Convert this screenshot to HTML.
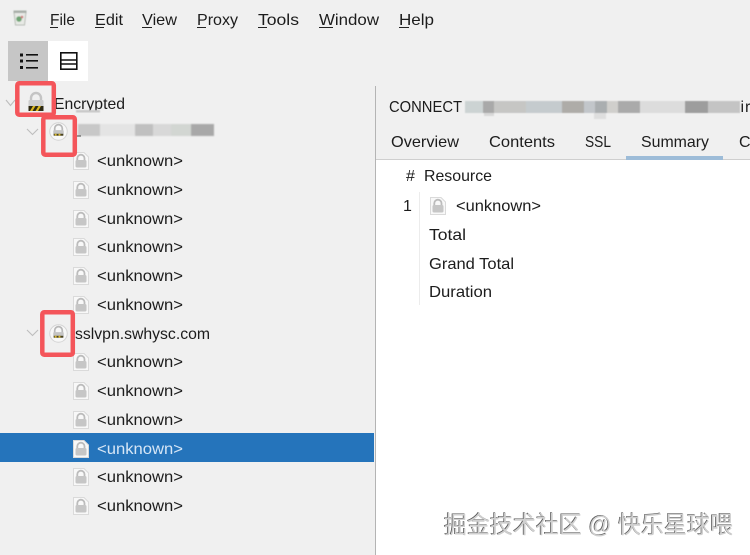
<!DOCTYPE html>
<html>
<head>
<meta charset="utf-8">
<style>
html,body{margin:0;padding:0;background:#f0f0f0;width:750px;height:555px;overflow:hidden}
svg{display:block;filter:blur(.3px)}
text{font-family:"Liberation Sans","Noto Sans CJK SC",sans-serif;font-size:16px;fill:#1c1c1c}
</style>
</head>
<body>
<svg width="750" height="555" viewBox="0 0 750 555" xmlns="http://www.w3.org/2000/svg">
<defs>
<filter id="b1" x="-5%" y="-30%" width="110%" height="160%"><feGaussianBlur stdDeviation="0.8"/></filter>
<filter id="s" x="-10%" y="-10%" width="120%" height="120%"><feGaussianBlur stdDeviation="0.4"/></filter>
<symbol id="page" viewBox="0 0 16 18" overflow="visible">
<path d="M0.5 0.5H11L15.500 5V17.500H0.5Z" fill="#f8f8f8" stroke="#dadada"/>
<path d="M4.300 9V6.300a3.600 3.600 0 0 1 7.200 0V9" fill="none" stroke="#bcbcbc" stroke-width="1.800"/>
<rect x="2.500" y="8" width="11" height="7.500" rx="1.500" fill="#c6c6c6"/>
</symbol>
<symbol id="round" viewBox="0 0 20 20" overflow="visible">
<circle cx="10" cy="10" r="9.200" fill="#f8f8f8" stroke="#d4d4d4"/>
<path d="M6 9V6.800a4 4 0 0 1 8 0V9" fill="none" stroke="#b8b8b8" stroke-width="1.800"/>
<rect x="4.500" y="8.500" width="11" height="6" rx="1" fill="#c4c4c4"/>
<rect x="5" y="12.400" width="10" height="2" fill="#4a4220"/>
<path d="M6 12.400h2v2H6zM10 12.400h2v2h-2z" fill="#d9ba30"/>
</symbol>
</defs>

<rect width="750" height="555" fill="#f0f0f0"/>

<!-- app icon -->
<g filter="url(#s)">
<path d="M14 12h12l-1.500 13h-9z" fill="#e8eae6" stroke="#b8bdb6"/>
<rect x="13.500" y="10.500" width="13" height="2.500" fill="#a9afa9"/>
<circle cx="19" cy="19" r="2.800" fill="#6fa474"/>
<circle cx="22" cy="17" r="1.300" fill="#cf7a7a"/>
</g>

<!-- menu -->
<g>
<text lengthAdjust="spacingAndGlyphs" x="50" y="25" textLength="25">File</text><rect x="50" y="27" width="8" height="1" fill="#222"/>
<text lengthAdjust="spacingAndGlyphs" x="95" y="25" textLength="28">Edit</text><rect x="95" y="27" width="9" height="1" fill="#222"/>
<text lengthAdjust="spacingAndGlyphs" x="142" y="25" textLength="35">View</text><rect x="142" y="27" width="10" height="1" fill="#222"/>
<text lengthAdjust="spacingAndGlyphs" x="197" y="25" textLength="41">Proxy</text><rect x="197" y="27" width="9" height="1" fill="#222"/>
<text lengthAdjust="spacingAndGlyphs" x="258" y="25" textLength="41">Tools</text><rect x="258" y="27" width="9" height="1" fill="#222"/>
<text lengthAdjust="spacingAndGlyphs" x="319" y="25" textLength="60">Window</text><rect x="319" y="27" width="14" height="1" fill="#222"/>
<text lengthAdjust="spacingAndGlyphs" x="399" y="25" textLength="35">Help</text><rect x="399" y="27" width="10" height="1" fill="#222"/>
</g>

<!-- toolbar -->
<rect x="8" y="41" width="40" height="40" fill="#c6c6c6"/>
<rect x="48" y="41" width="40" height="40" fill="#fff"/>
<g fill="#111">
<rect x="20" y="53.500" width="3" height="3"/><rect x="20" y="59.500" width="3" height="3"/><rect x="20" y="66" width="3" height="3"/>
<rect x="26" y="54" width="12" height="1.600"/><rect x="26" y="60" width="12" height="1.600"/><rect x="26" y="67" width="12" height="1.600"/>
</g>
<g fill="none" stroke="#111" stroke-width="1.600">
<rect x="60.800" y="52.800" width="16" height="16.400"/>
<path d="M61 60h16M61 64h16"/>
</g>

<!-- selected row -->
<rect x="0" y="433" width="374" height="29" fill="#2574bb"/>

<!-- divider -->
<rect x="375" y="86" width="1" height="469" fill="#b4b4b4"/>

<!-- right panel white -->
<rect x="376" y="160" width="374" height="395" fill="#fff"/>
<rect x="376" y="159" width="374" height="1" fill="#cfcfcf"/>
<rect x="626" y="156" width="97" height="4" fill="#9dbcd8"/>

<!-- chevrons -->
<g fill="none" stroke="#bdbdbd" stroke-width="1.100">
<path d="M6 100l4.500 5.500L15 100"/>
<path d="M27 129l5.500 5.500L38 129"/>
<path d="M27 330l5.500 5.500L38 330"/>
</g>

<!-- tree icons -->
<g>
<path d="M31 101v-3a5 5 0 0 1 10 0v3" fill="none" stroke="#c4c4c4" stroke-width="2.400"/>
<rect x="28.500" y="100" width="15" height="11" rx="1" fill="#cdcdcd"/>
<rect x="28.500" y="106" width="15" height="5" fill="#2e2a14"/>
<path d="M30 111l3-5h2.500l-3 5zM35.500 111l3-5H41l-3 5z" fill="#dcb81e"/>
</g>
<use href="#round" x="49" y="122" width="19" height="19"/>
<use href="#round" x="49" y="324" width="19" height="19"/>

<use href="#page" x="73" y="152" width="16" height="18"/>
<use href="#page" x="73" y="181" width="16" height="18"/>
<use href="#page" x="73" y="210" width="16" height="18"/>
<use href="#page" x="73" y="238" width="16" height="18"/>
<use href="#page" x="73" y="267" width="16" height="18"/>
<use href="#page" x="73" y="296" width="16" height="18"/>
<use href="#page" x="73" y="353" width="16" height="18"/>
<use href="#page" x="73" y="382" width="16" height="18"/>
<use href="#page" x="73" y="411" width="16" height="18"/>
<use href="#page" x="73" y="440" width="16" height="18"/>
<use href="#page" x="73" y="468" width="16" height="18"/>
<use href="#page" x="73" y="497" width="16" height="18"/>

<!-- tree text -->
<text lengthAdjust="spacingAndGlyphs" x="54" y="109" textLength="71">Encrypted</text>
<rect x="72" y="110.500" width="30" height="5" fill="#f0f0f0"/>
<rect x="76" y="110" width="24" height="2.500" fill="#c9c9c9" filter="url(#s)"/>
<text lengthAdjust="spacingAndGlyphs" x="75" y="339" textLength="135">sslvpn.swhysc.com</text>
<g>
<text lengthAdjust="spacingAndGlyphs" x="97" y="166" textLength="86">&lt;unknown&gt;</text>
<text lengthAdjust="spacingAndGlyphs" x="97" y="195" textLength="86">&lt;unknown&gt;</text>
<text lengthAdjust="spacingAndGlyphs" x="97" y="224" textLength="86">&lt;unknown&gt;</text>
<text lengthAdjust="spacingAndGlyphs" x="97" y="252" textLength="86">&lt;unknown&gt;</text>
<text lengthAdjust="spacingAndGlyphs" x="97" y="281" textLength="86">&lt;unknown&gt;</text>
<text lengthAdjust="spacingAndGlyphs" x="97" y="310" textLength="86">&lt;unknown&gt;</text>
<text lengthAdjust="spacingAndGlyphs" x="97" y="367" textLength="86">&lt;unknown&gt;</text>
<text lengthAdjust="spacingAndGlyphs" x="97" y="396" textLength="86">&lt;unknown&gt;</text>
<text lengthAdjust="spacingAndGlyphs" x="97" y="425" textLength="86">&lt;unknown&gt;</text>
<text lengthAdjust="spacingAndGlyphs" x="97" y="454" textLength="86" style="fill:#d6e6f6">&lt;unknown&gt;</text>
<text lengthAdjust="spacingAndGlyphs" x="97" y="482" textLength="86">&lt;unknown&gt;</text>
<text lengthAdjust="spacingAndGlyphs" x="97" y="511" textLength="86">&lt;unknown&gt;</text>
</g>

<!-- blurred host row -->
<g filter="url(#b1)">
<rect x="78" y="124" width="22" height="12" fill="#c8c8c8"/>
<rect x="100" y="124" width="35" height="12" fill="#e4e4e4"/>
<rect x="135" y="124" width="18" height="12" fill="#c0c0c0"/>
<rect x="153" y="124" width="18" height="12" fill="#d8d8d8"/>
<rect x="171" y="124" width="20" height="12" fill="#d2d6d2"/>
<rect x="191" y="124" width="23" height="12" fill="#a8a8a8"/>
</g>
<path d="M76 132v4h5" fill="none" stroke="#444" stroke-width="1"/>

<!-- CONNECT bar -->
<text lengthAdjust="spacingAndGlyphs" x="389" y="112" textLength="73">CONNECT</text>
<g filter="url(#s)">
<rect x="465" y="101" width="18" height="12" fill="#ccd3d3"/>
<rect x="483" y="101" width="11" height="12" fill="#a9a9a9"/>
<rect x="494" y="101" width="32" height="12" fill="#c6c6c4"/>
<rect x="526" y="101" width="36" height="12" fill="#c5cbce"/>
<rect x="562" y="101" width="22" height="12" fill="#aeaca8"/>
<rect x="584" y="101" width="11" height="12" fill="#c2c6ca"/>
<rect x="595" y="101" width="12" height="12" fill="#aaaeb0"/>
<rect x="607" y="101" width="11" height="12" fill="#d0cfcc"/>
<rect x="618" y="101" width="22" height="12" fill="#aaaaaa"/>
<rect x="640" y="101" width="45" height="12" fill="#dcdcdc"/>
<rect x="685" y="101" width="23" height="12" fill="#9d9d9d"/>
<rect x="708" y="101" width="32" height="12" fill="#c4c4c4"/>
<rect x="484" y="113" width="10" height="3" fill="#d8d8d8"/>
<rect x="594" y="113" width="12" height="6" fill="#dedede"/>
</g>
<text x="740.500" y="112" style="font-size:16px">i</text>
<text x="745" y="112">r</text>

<!-- tabs -->
<text lengthAdjust="spacingAndGlyphs" x="391" y="147" textLength="68">Overview</text>
<text lengthAdjust="spacingAndGlyphs" x="489" y="147" textLength="66">Contents</text>
<text lengthAdjust="spacingAndGlyphs" x="585" y="147" textLength="26">SSL</text>
<text lengthAdjust="spacingAndGlyphs" x="641" y="147" textLength="68">Summary</text>
<text x="739" y="147">C</text>

<!-- summary table -->
<rect x="419" y="192" width="1" height="113" fill="#ececec"/>
<text x="406" y="181">#</text>
<text lengthAdjust="spacingAndGlyphs" x="424" y="181" textLength="68">Resource</text>
<text x="403" y="211">1</text>
<use href="#page" x="430" y="197" width="16" height="18"/>
<text lengthAdjust="spacingAndGlyphs" x="456" y="211" textLength="85">&lt;unknown&gt;</text>
<text lengthAdjust="spacingAndGlyphs" x="429" y="240" textLength="37">Total</text>
<text lengthAdjust="spacingAndGlyphs" x="429" y="269" textLength="85">Grand Total</text>
<text lengthAdjust="spacingAndGlyphs" x="429" y="297" textLength="63">Duration</text>

<!-- red highlight boxes -->
<g fill="none" stroke="#f4555a" stroke-width="4.500">
<rect x="17.300" y="83.300" width="36.500" height="31.500" rx="2"/>
<rect x="43.300" y="117.300" width="31.500" height="37.500" rx="2"/>
<rect x="42.300" y="312.300" width="30.500" height="42.500" rx="2"/>
</g>

<!-- watermark -->
<g>
<text lengthAdjust="spacingAndGlyphs" x="444" y="533" textLength="289" style="font-size:24px;fill:#fff" transform="translate(1.200 1.200)">掘金技术社区 @ 快乐星球喂</text>
<text lengthAdjust="spacingAndGlyphs" x="444" y="533" textLength="289" style="font-size:24px;fill:#555" transform="translate(-0.700 -0.700)">掘金技术社区 @ 快乐星球喂</text>
<text lengthAdjust="spacingAndGlyphs" x="444" y="533" textLength="289" style="font-size:24px;fill:#cfcfcf">掘金技术社区 @ 快乐星球喂</text>
</g>
</svg>
</body>
</html>
